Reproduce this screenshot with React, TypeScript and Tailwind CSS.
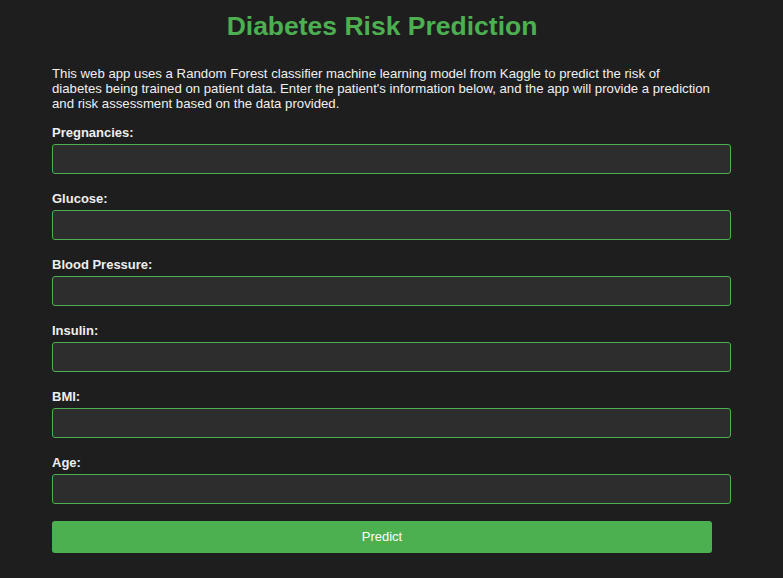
import React from 'react';

const fields = ['Pregnancies:', 'Glucose:', 'Blood Pressure:', 'Insulin:', 'BMI:', 'Age:'];

export default function App() {
  return (
    <div className="min-h-[578px] w-full bg-[#1e1e1e] text-[#e0e0e0] font-['Liberation_Sans',Arial,sans-serif]">
      <div className="ml-[52px] w-[660px]">
        <h1 className="pt-[11px] text-center text-[26.5px] leading-[30px] font-bold text-[#4caf50]">
          Diabetes Risk Prediction
        </h1>

        <p className="mt-[25px] w-[668px] text-[13.2px] leading-[15px] text-[#f0f0f0]">
          This web app uses a Random Forest classifier machine learning model from Kaggle to predict the risk of
          <br />
          diabetes being trained on patient data. Enter the patient's information below, and the app will provide a prediction
          <br />
          and risk assessment based on the data provided.
        </p>

        <form className="mt-[14px]" onSubmit={(e) => e.preventDefault()}>
          {fields.map((f) => (
            <div key={f} className="mb-[17px]">
              <label className="block text-[13px] leading-[15px] font-bold text-[#eeeeee] mb-[4px]">{f}</label>
              <input
                type="text"
                className="block h-[30px] w-[679px] rounded-[3px] border border-[#4caf50] bg-[#2d2d2d] px-2 text-[13px] text-white outline-none"
              />
            </div>
          ))}
          <button
            type="submit"
            className="block h-[32px] w-[660px] rounded-[3px] bg-[#4caf50] text-[13px] text-white"
          >
            Predict
          </button>
        </form>
      </div>
    </div>
  );
}
